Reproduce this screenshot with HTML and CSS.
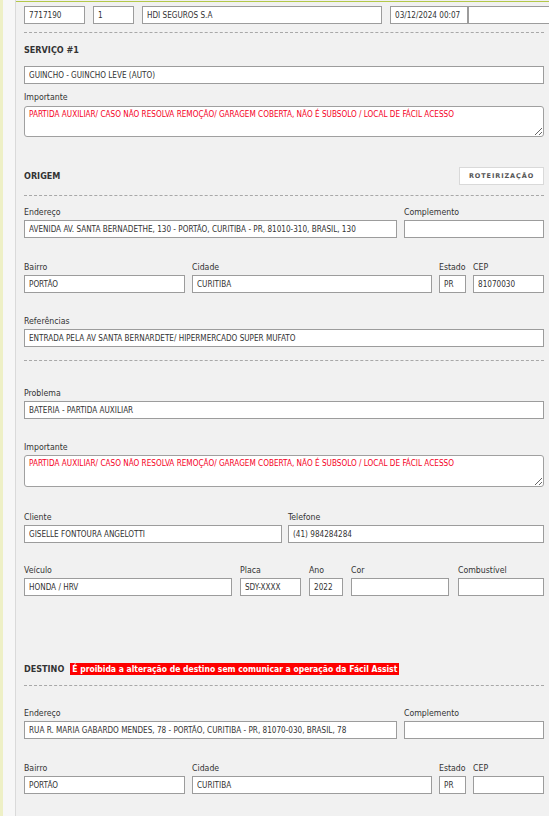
FILE: index.html
```html
<!DOCTYPE html>
<html lang="pt-BR">
<head>
<meta charset="utf-8">
<title>Atendimento</title>
<link rel="stylesheet" href="styles.css">
</head>
<body>
<div class="page">
  <div class="rail"></div>
  <div class="main">
    <div class="topline"></div>

    <div class="row row-top">
      <input class="inp" type="text" value="7717190">
      <input class="inp" type="text" value="1">
      <input class="inp" type="text" value="HDI SEGUROS S.A">
      <input class="inp" type="text" value="03/12/2024 00:07">
      <input class="inp" type="text" value="">
    </div>

    <div class="dash dash-1"></div>

    <div class="heading heading-servico">SERVIÇO #1</div>

    <input class="inp inp-servico" type="text" value="GUINCHO - GUINCHO LEVE (AUTO)">

    <div class="field field-imp1">
      <label class="label lbl-imp1">Importante</label>
      <textarea class="area">PARTIDA AUXILIAR/ CASO NÃO RESOLVA REMOÇÃO/ GARAGEM COBERTA, NÃO É SUBSOLO / LOCAL DE FÁCIL ACESSO</textarea>
    </div>

    <div class="section-head head-origem">
      <div class="heading">ORIGEM</div>
      <button class="btn" type="button">ROTEIRIZAÇÃO</button>
    </div>

    <div class="dash dash-2"></div>

    <div class="row row-end sp-end">
      <div class="field"><label class="label">Endereço</label><input class="inp" type="text" value="AVENIDA AV. SANTA BERNADETHE, 130 - PORTÃO, CURITIBA - PR, 81010-310, BRASIL, 130"></div>
      <div class="field"><label class="label">Complemento</label><input class="inp" type="text" value=""></div>
    </div>

    <div class="row row-bairro sp-bairro">
      <div class="field"><label class="label">Bairro</label><input class="inp" type="text" value="PORTÃO"></div>
      <div class="field"><label class="label">Cidade</label><input class="inp" type="text" value="CURITIBA"></div>
      <div class="field"><label class="label">Estado</label><input class="inp" type="text" value="PR"></div>
      <div class="field"><label class="label">CEP</label><input class="inp" type="text" value="81070030"></div>
    </div>

    <div class="field sp-ref">
      <label class="label">Referências</label>
      <input class="inp" type="text" value="ENTRADA PELA AV SANTA BERNARDETE/ HIPERMERCADO SUPER MUFATO">
    </div>

    <div class="dash dash-3"></div>

    <div class="field sp-prob">
      <label class="label">Problema</label>
      <input class="inp" type="text" value="BATERIA - PARTIDA AUXILIAR">
    </div>

    <div class="field sp-imp2">
      <label class="label lbl-imp2">Importante</label>
      <textarea class="area area-2">PARTIDA AUXILIAR/ CASO NÃO RESOLVA REMOÇÃO/ GARAGEM COBERTA, NÃO É SUBSOLO / LOCAL DE FÁCIL ACESSO</textarea>
    </div>

    <div class="row row-cliente sp-cliente">
      <div class="field"><label class="label">Cliente</label><input class="inp" type="text" value="GISELLE FONTOURA ANGELOTTI"></div>
      <div class="field"><label class="label">Telefone</label><input class="inp" type="text" value="(41) 984284284"></div>
    </div>

    <div class="row row-veiculo sp-veiculo">
      <div class="field"><label class="label">Veículo</label><input class="inp" type="text" value="HONDA / HRV"></div>
      <div class="field"><label class="label">Placa</label><input class="inp" type="text" value="SDY-XXXX"></div>
      <div class="field"><label class="label">Ano</label><input class="inp" type="text" value="2022"></div>
      <div class="field"><label class="label">Cor</label><input class="inp" type="text" value=""></div>
      <div class="field"><label class="label">Combustível</label><input class="inp" type="text" value=""></div>
    </div>

    <div class="section-head head-destino">
      <div class="heading">DESTINO</div>
      <span class="alert">É proibida a alteração de destino sem comunicar a operação da Fácil Assist</span>
    </div>

    <div class="dash dash-4"></div>

    <div class="row row-end sp-end2">
      <div class="field"><label class="label">Endereço</label><input class="inp" type="text" value="RUA R. MARIA GABARDO MENDES, 78 - PORTÃO, CURITIBA - PR, 81070-030, BRASIL, 78"></div>
      <div class="field"><label class="label">Complemento</label><input class="inp" type="text" value=""></div>
    </div>

    <div class="row row-bairro sp-bairro">
      <div class="field"><label class="label">Bairro</label><input class="inp" type="text" value="PORTÃO"></div>
      <div class="field"><label class="label">Cidade</label><input class="inp" type="text" value="CURITIBA"></div>
      <div class="field"><label class="label">Estado</label><input class="inp" type="text" value="PR"></div>
      <div class="field"><label class="label">CEP</label><input class="inp" type="text" value=""></div>
    </div>
  </div>
</div>
</body>
</html>
```

FILE: styles.css
```css
* { box-sizing: border-box; }

html, body {
  margin: 0;
  padding: 0;
  height: 816px;
  overflow: hidden;
}

body {
  background: #f7f7f7;
  font-family: "DejaVu Sans Condensed", "DejaVu Sans", sans-serif;
  font-stretch: condensed;
  color: #333;
}

.page {
  display: flex;
  min-height: 816px;
}

.rail {
  flex: none;
  width: 16px;
  background: #f7f7f7;
  border-left: 3px solid #eef0c6;
  border-right: 1px solid #dadada;
}

.main {
  flex: 1;
  min-width: 0;
  background: #f1f1f1;
  padding: 0 5px 0 8px;
  display: flex;
  flex-direction: column;
}

.topline {
  flex: none;
  margin: 1px -5px 0 -8px;
  height: 1px;
  background: #b3c849;
}

.row {
  display: grid;
  flex: none;
}

.row-top {
  margin-top: 4px;
  grid-template-columns: 61px 41px 240px 78px 76px;
  column-gap: 8px;
}
.row-top .inp:nth-child(5) { margin-left: -8px; width: calc(100% + 8px); }

.inp {
  display: block;
  width: 100%;
  height: 18px;
  margin: 0;
  border: 1px solid #9c9c9c;
  border-radius: 0;
  background: #fff;
  padding: 0 4px;
  font-family: "DejaVu Sans Condensed", "DejaVu Sans", sans-serif;
  font-stretch: condensed;
  font-size: 8.1px;
  line-height: normal;
  color: #333;
  outline: none;
}

.dash {
  flex: none;
  height: 0;
  border-top: 1px dashed #a8a8a8;
}
.dash-1 { margin-top: 8px; }
.dash-2 { margin-top: 10px; }
.dash-3 { margin-top: 13px; }
.dash-4 { margin-top: 10px; }

.heading {
  font-size: 9px;
  font-weight: bold;
  line-height: 12px;
  height: 12px;
  color: #333;
  white-space: nowrap;
}
.heading-servico { flex: none; margin-top: 11px; }

.inp-servico { flex: none; margin-top: 10px; }

.field {
  display: flex;
  flex-direction: column;
  min-width: 0;
  flex: none;
}

.label {
  display: block;
  font-size: 8.7px;
  line-height: 12px;
  height: 12px;
  margin-bottom: 2px;
  color: #333;
  white-space: nowrap;
}

.field-imp1 { margin-top: 7px; }
.lbl-imp1 { margin-bottom: 3px; }

.area {
  display: block;
  width: 100%;
  height: 31px;
  margin: 0;
  border: 1px solid #a0a0a0;
  border-radius: 3px;
  background: #fff;
  padding: 2px 4px;
  font-family: "DejaVu Sans Condensed", "DejaVu Sans", sans-serif;
  font-stretch: condensed;
  font-size: 8.15px;
  line-height: 10px;
  color: #f5001e;
  resize: vertical;
  overflow: hidden;
  outline: none;
}
.area-2 { height: 32px; }

.section-head {
  flex: none;
  display: flex;
  align-items: center;
}

.head-origem {
  margin-top: 30px;
  justify-content: space-between;
  height: 18px;
}

.btn {
  width: 85px;
  height: 18px;
  margin: 0;
  padding: 0;
  border: 1px solid #d9d9d9;
  background: #fff;
  font-family: "DejaVu Sans", sans-serif;
  font-size: 6.5px;
  font-weight: bold;
  letter-spacing: 0.9px;
  color: #555;
  cursor: pointer;
}

.head-destino {
  margin-top: 67px;
  height: 12px;
}

.alert {
  margin-left: 6px;
  height: 12px;
  line-height: 12px;
  padding: 0 2px;
  background: #fe0000;
  color: #fff;
  font-size: 8.5px;
  font-weight: bold;
  white-space: nowrap;
}

.row-end {
  grid-template-columns: 373px 1fr;
  column-gap: 7px;
}
.row-bairro {
  grid-template-columns: 161px 240px 27px 1fr;
  column-gap: 7px;
}
.row-cliente {
  grid-template-columns: 258px 1fr;
  column-gap: 6px;
}
.row-veiculo {
  grid-template-columns: 208px 61px 34px 98px 1fr;
  column-gap: 8px;
}
.row-veiculo .field:nth-child(5) { margin-left: 1px; }

.sp-end { margin-top: 10px; }
.sp-bairro { margin-top: 23px; }
.sp-ref { margin-top: 22px; }
.sp-prob { margin-top: 26px; }
.sp-imp2 { margin-top: 22px; }
.sp-cliente { margin-top: 24px; }
.sp-veiculo { margin-top: 21px; }
.sp-end2 { margin-top: 21px; }
```
